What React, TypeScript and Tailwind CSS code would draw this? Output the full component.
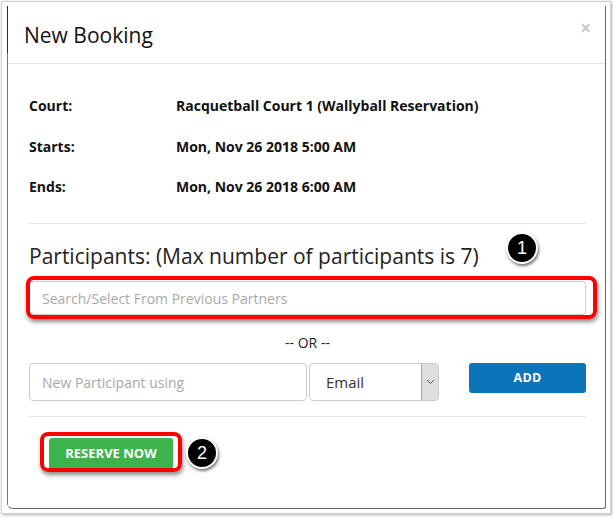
import React from 'react';

const details = [
  { label: 'Court:', value: 'Racquetball Court 1 (Wallyball Reservation)' },
  { label: 'Starts:', value: 'Mon, Nov 26 2018 5:00 AM' },
  { label: 'Ends:', value: 'Mon, Nov 26 2018 6:00 AM' },
];

const Badge: React.FC<{ n: string; className: string }> = ({ n, className }) => (
  <div
    className={`absolute w-[32px] h-[32px] rounded-full bg-black border-2 border-white shadow-[1px_2px_3px_rgba(0,0,0,0.55)] flex items-center justify-center text-white text-[18px] leading-none ${className}`}
    style={{ fontFamily: 'Arial, "Liberation Sans", sans-serif' }}
  >
    {n}
  </div>
);

export default function App() {
  return (
    <div
      className="w-[613px] h-[517px] bg-white relative overflow-hidden text-[#222]"
      style={{ fontFamily: '"Open Sans", "Noto Sans", sans-serif' }}
    >
      {/* screenshot frame */}
      <div className="ml-[1px] mt-[1px] w-[610px] h-[513px] border border-[#d2d2d2] shadow-[1px_1px_3px_rgba(0,0,0,0.3)] bg-white pl-[5px] pt-[4px]">
        {/* modal */}
        <div className="flex w-[599px] h-[503px] border-r border-b border-[#6a6a6a] rounded-br-[3px] rounded-bl-[6px] overflow-hidden bg-white">
          <div className="w-[1px] shrink-0 bg-[linear-gradient(#0b3954_0px,#0b3954_47px,#777_47px)]" />
          <div className="flex-1 flex flex-col">
            {/* header */}
            <div className="h-[58px] border-b border-[#e5e5e5] flex items-center justify-between pl-[16px] pr-[14px]">
              <h1 className="text-[21px] leading-[28px] text-[#111] font-normal">New Booking</h1>
              <span className="text-[19px] font-bold leading-none text-[#c8c8c8] mb-[12px]">×</span>
            </div>

            {/* body */}
            <div className="pl-[21px] pr-[19px] pt-[32px]">
              <div className="flex flex-col gap-[20.5px]">
                {details.map((d) => (
                  <div key={d.label} className="grid grid-cols-[147px_1fr] text-[14px] font-bold leading-[20px] text-[#111]">
                    <span>{d.label}</span>
                    <span>{d.value}</span>
                  </div>
                ))}
              </div>

              <div className="mt-[26px] border-t border-[#e5e5e5]" />

              <h2 className="mt-[18px] text-[21px] leading-[28px] font-normal text-[#222]">
                Participants: (Max number of participants is 7)
              </h2>

              <input
                className="mt-[11px] w-full h-[34px] border border-[#ccc] rounded-[4px] px-[12px] text-[14px] outline-none placeholder:text-[#a9a9a9]"
                placeholder="Search/Select From Previous Partners"
              />

              <div className="mt-[19px] text-center text-[14px] leading-[18px] text-[#222]">-- OR --</div>

              <div className="mt-[11px] flex items-start">
                <input
                  className="w-[278px] h-[38px] border border-[#ccc] rounded-[4px] px-[12px] text-[14px] outline-none placeholder:text-[#a9a9a9]"
                  placeholder="New Participant using"
                />
                <div className="ml-[2px] w-[130px] h-[38px] border border-[#ccc] rounded-[4px] flex overflow-hidden">
                  <span className="flex-1 pl-[16px] flex items-center text-[15px] text-[#333]">Email</span>
                  <span className="w-[17px] bg-[#dedede] border-l border-[#a9a9a9] flex items-center justify-center">
                    <svg width="9" height="6" viewBox="0 0 9 6" fill="none">
                      <path d="M1 1l3.5 3.5L8 1" stroke="#555" strokeWidth="1" />
                    </svg>
                  </span>
                </div>
                <button className="ml-auto w-[117px] h-[30px] rounded-[3px] bg-[#0a75b8] text-white text-[12.5px] font-bold tracking-[0.3px]">
                  ADD
                </button>
              </div>

              <div className="mt-[15px] border-t border-[#e5e5e5]" />

              <button className="mt-[21px] ml-[20px] w-[124px] h-[31px] rounded-[3px] bg-[#3cb44b] text-white text-[13px] font-bold">
                RESERVE NOW
              </button>
            </div>
          </div>
        </div>
      </div>

      {/* annotations */}
      <div className="absolute left-[26px] top-[276px] w-[571px] h-[43px] rounded-[8px] border-[4px] border-[#f00] shadow-[1px_3px_4px_rgba(0,0,0,0.45)]" />
      <div className="absolute left-[40px] top-[432px] w-[142px] h-[40px] rounded-[8px] border-[4px] border-[#f00] shadow-[1px_3px_4px_rgba(0,0,0,0.45)]" />
      <Badge n="1" className="left-[506px] top-[232px]" />
      <Badge n="2" className="left-[186px] top-[437px]" />
    </div>
  );
}
